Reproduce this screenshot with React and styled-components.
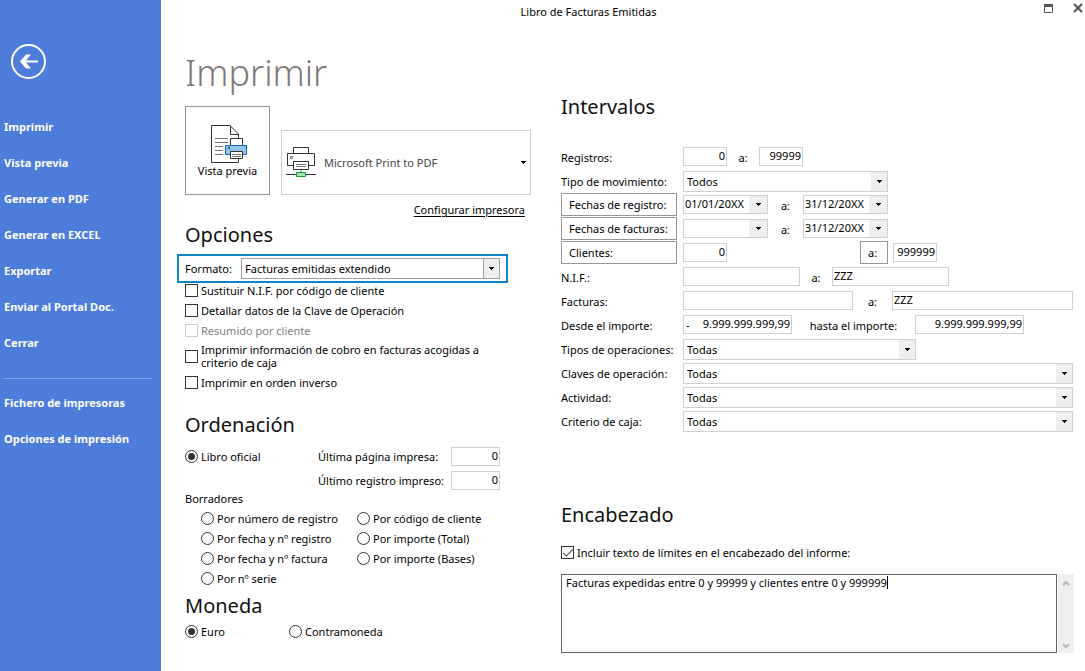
import React, { useState } from "react";
import styled, { createGlobalStyle } from "styled-components";

const GlobalStyle = createGlobalStyle`
    * {
        box-sizing: border-box;
    }

    body {
        margin: 0;
        background: #fff;
    }

    body, button, input, select, textarea {
        font-family: "Noto Sans", "Open Sans", sans-serif;
        font-size: 11px;
        color: #000;
    }
`;

const Window = styled.div`
    display: flex;
    min-height: 100vh;
`;

const Sidebar = styled.aside`
    flex: 0 0 161px;
    padding-top: 43px;
    background: #4d7cdb;
`;

const BackButton = styled.button`
    display: block;
    margin: 0 0 29px 10px;
    padding: 0;
    border: 0;
    background: none;
    line-height: 0;
`;

const MenuLink = styled.a`
    display: block;
    padding-left: 4px;
    line-height: 36px;
    font-weight: 700;
    color: #fff;
    text-decoration: none;
`;

const MenuDivider = styled.hr`
    margin: 17px 8px 6px 3px;
    border: 0;
    border-top: 1px solid #7c9fe6;
`;

const Main = styled.main`
    flex: 1;
    min-width: 0;
`;

const TitleBar = styled.header`
    display: flex;
    height: 24px;
    line-height: 24px;
`;

const WindowTitle = styled.div`
    flex: 1;
    text-align: center;
`;

const WindowButtons = styled.div`
    display: flex;
    justify-content: flex-end;
    align-items: flex-start;
    gap: 17px;
    width: 69px;
    padding: 2px 1px 0 0;
`;

const WindowButton = styled.button`
    padding: 0;
    border: 0;
    background: none;
    line-height: 0;
`;

const Columns = styled.div`
    display: flex;
    gap: 30px;
    padding: 0 12px 0 24px;
`;

const LeftColumn = styled.div`
    flex: 0 0 346px;
    padding-top: 24px;
`;

const RightColumn = styled.div`
    flex: 1;
    min-width: 0;
    padding-top: 68px;
`;

const PageTitle = styled.h1`
    margin: 0;
    line-height: 50px;
    font-size: 36px;
    font-weight: 300;
    color: #807a7a;
`;

const Heading = styled.h2`
    margin: 0;
    line-height: 30px;
    font-size: 20px;
    font-weight: 400;
    color: #111;
`;

const PrintRow = styled.div`
    display: flex;
    align-items: flex-end;
    gap: 11px;
    margin-top: 8px;
`;

const PreviewButton = styled.button`
    display: flex;
    flex-direction: column;
    align-items: center;
    width: 85px;
    height: 89px;
    padding: 18px 0 0;
    border: 1px solid #969696;
    background: #fff;
    line-height: 14px;
    white-space: nowrap;
`;

const PrinterBox = styled.div`
    display: grid;
    grid-template-columns: 38px 1fr 14px;
    grid-template-rows: 1fr;
    align-items: center;
    flex: 1;
    height: 65px;
    border: 1px solid #d0d0d0;

    svg {
        grid-row: 1;
        grid-column: 1;
        justify-self: center;
        pointer-events: none;
    }

    svg:last-child {
        grid-column: 3;
    }
`;

const PrinterSelect = styled.select`
    grid-row: 1;
    grid-column: 1 / 4;
    width: 100%;
    height: 100%;
    padding: 0 20px 0 42px;
    border: 0;
    appearance: none;
    background: none;
    color: #444;
`;

const ConfigLine = styled.div`
    padding: 5px 6px 0 0;
    text-align: right;
    line-height: 20px;

    a {
        color: #000;
        text-underline-offset: 2px;
    }
`;

const FormatRow = styled.div`
    display: flex;
    align-items: center;
    justify-content: space-between;
    width: 331px;
    margin: 4px 0 -3px -8px;
    padding: 2px 6px;
    border: 2px solid #0d84c5;
`;

const SelectBox = styled.div`
    display: grid;
    grid-template-columns: 1fr 16px;
    flex: ${props => (props.$width ? "none" : "1")};
    width: ${props => (props.$width ? props.$width + "px" : "auto")};
    height: 21px;
    border: 1px solid ${props => (props.$strong ? "#a0a0a0" : "#d0d0d0")};
`;

const Select = styled.select`
    grid-row: 1;
    grid-column: 1 / 3;
    min-width: 0;
    padding: 0 18px 0 3px;
    border: 0;
    appearance: none;
    background: #fff;
`;

const ArrowCell = styled.span`
    grid-row: 1;
    grid-column: 2;
    display: flex;
    align-items: center;
    justify-content: center;
    border-left: ${props => (props.$strong ? "1px solid #a0a0a0" : "0")};
    background: #efefef;
    pointer-events: none;
`;

const OptionLabel = styled.label`
    display: flex;
    align-items: center;
    gap: 3px;
    min-height: 20px;
    padding: 3px 0;
    line-height: 13px;
    color: ${props => (props.$off ? "#808080" : "#000")};
`;

const CheckInput = styled.input`
    display: grid;
    place-content: center;
    flex: none;
    width: 13px;
    height: 13px;
    margin: 0;
    border: 1px solid #333;
    appearance: none;
    background: #fff;

    &:disabled {
        border-color: #ccc;
    }

    &:checked::before {
        content: "";
        width: 9px;
        height: 4px;
        border: solid #444;
        border-width: 0 0 1px 1px;
        transform: translateY(-1px) rotate(-45deg);
    }
`;

const RadioInput = styled.input`
    display: grid;
    place-content: center;
    flex: none;
    width: 13px;
    height: 13px;
    margin: 0;
    border: 1px solid #333;
    border-radius: 50%;
    appearance: none;
    background: #fff;

    &:checked::before {
        content: "";
        width: 7px;
        height: 7px;
        border-radius: 50%;
        background: #333;
    }
`;

const OrderSection = styled.section`
    margin: 18px 0 3px;
`;

const OrderTop = styled.div`
    display: grid;
    grid-template-columns: 133px 133px 49px;
    grid-auto-rows: 24px;
    align-items: center;
    margin-top: 4px;
`;

const Drafts = styled.fieldset`
    margin: 0;
    padding: 0;
    border: 0;

    legend {
        padding: 0;
        line-height: 14px;
    }
`;

const DraftGrid = styled.div`
    display: grid;
    grid-template-columns: 156px 1fr;
    grid-template-rows: repeat(4, 20px);
    grid-auto-flow: column;
    padding: 2px 0 0 16px;
`;

const CurrencyRow = styled.div`
    display: grid;
    grid-template-columns: 104px 1fr;
`;

const Ranges = styled.div`
    display: flex;
    flex-direction: column;
    margin-top: 23px;
`;

const RangeRow = styled.div`
    display: flex;
    height: 24px;
    align-items: flex-start;
`;

const RangeLabel = styled.label`
    flex: 0 0 122px;
    line-height: 26px;
    white-space: nowrap;
`;

const RangeButtonCell = styled.div`
    flex: 0 0 122px;
`;

const RangeButton = styled.button`
    width: ${props => props.$width}px;
    height: 23px;
    padding: 0 7px;
    border: 1px solid #969696;
    background: #fff;
    text-align: left;
    white-space: nowrap;
`;

const RangeBody = styled.div`
    display: flex;
    flex: 1;
    min-width: 0;
    padding-top: 2px;
`;

const ClientGroup = styled.div`
    display: flex;
    justify-content: space-between;
    align-items: center;
    width: 205px;
    height: 19px;
    margin-right: 5px;
`;

const Until = styled.label`
    flex: 0 0 ${props => props.$width}px;
    text-align: center;
    line-height: 22px;
`;

const Field = styled.div`
    display: flex;
    flex: ${props => (props.$width ? "none" : "1")};
    width: ${props => (props.$width ? props.$width + "px" : "auto")};
    height: 19px;
    border: 1px solid #d0d0d0;
`;

const FieldInput = styled.input`
    flex: 1;
    width: 0;
    padding: 0 1px 2px;
    border: 0;
    outline: 0;
    background: none;
    text-align: ${props => (props.$right ? "right" : "left")};
`;

const Sign = styled.span`
    padding-left: 2px;
    line-height: 18px;
`;

const DateButton = styled.button`
    display: flex;
    align-items: center;
    justify-content: center;
    width: 18px;
    padding: 0;
    border: 0;
    background: #efefef;
`;

const HeaderSection = styled.section`
    margin-top: 67px;
`;

const HeaderOption = styled.div`
    margin-top: 12px;
`;

const NoteRow = styled.div`
    display: flex;
    gap: 1px;
    height: 79px;
    margin: 12px -1px 0 0;
`;

// the gradient is the text cursor after the last digit
const NoteArea = styled.textarea`
    flex: 1;
    min-width: 0;
    padding: 0 4px;
    border: 1px solid #646464;
    outline: 0;
    resize: none;
    overflow: hidden;
    line-height: 15px;
    background: linear-gradient(#000, #000) 325px 1px / 1px 13px no-repeat #fff;
`;

const ScrollTrack = styled.div`
    display: flex;
    flex-direction: column;
    justify-content: space-between;
    align-items: center;
    width: 16px;
    padding: 6px 0 4px;
    background: #efefef;
`;

const Arrow = () => (
    <svg width="5" height="3" viewBox="0 0 5 3" shapeRendering="crispEdges">
        <path d="M0 0h5v1H0zM1 1h3v1H1zM2 2h1v1H2z" fill="#000" />
    </svg>
);

const BackIcon = () => (
    <svg width="37" height="37" viewBox="0 0 37 37" fill="none">
        <circle cx="18.5" cy="18.5" r="16.5" stroke="#fff" strokeWidth="2" />
        <path d="M10 18.500l6-7h5l-5 6H28v2H16l5 6h-5z" fill="#fff" />
    </svg>
);

const PreviewIcon = () => (
    <svg width="39" height="39" viewBox="-3 0 39 39" fill="none" stroke="#333">
        <path d="M.5 .5h18.500l8.500 8.500v28.500H.5z" fill="#fff" />
        <path d="M19.500 .5v9h8" />
        <path d="M4 13.500h13M4 17.500h13M4 21.500h8M4 25.500h8M4 29.500h8" stroke="#777" />
        <path d="M19.500 13.500h12v7h-12z" fill="#fff" />
        <path d="M14.500 20.500h21v9h-21z" fill="#92c5ec" stroke="#1464b4" />
        <path d="M17 22h2v2h-2z" fill="#1464b4" stroke="none" />
        <path d="M19.500 26.500h12v7h-12z" fill="#fff" />
        <path d="M21 29.500h9M21 31.500h9" stroke="#777" />
    </svg>
);

const PrinterIcon = () => (
    <svg width="30" height="31" viewBox="0 0 30 31" fill="none" stroke="#333">
        <path d="M7.500 6.500v-6h15v6M7.500 18.500h-6v-12h27v12h-6" />
        <path d="M4.500 9.500h2v2h-2z" stroke="#777" />
        <path d="M7.500 14.500h15v8h-15z" />
        <path d="M10 17.500h10M10 19.500h10" stroke="#777" />
        <path d="M15 23v3" stroke="#9ccfa8" strokeWidth="2" />
        <path d="M0 27.500h30" />
        <path d="M10.500 25.500h9v4h-9z" fill="#a8e0b4" stroke="#109a3c" />
    </svg>
);

const ScrollArrow = ({ down }) => (
    <svg width="8" height="6" viewBox="0 0 8 6" fill="none" stroke="#b8b8b8" strokeWidth="2">
        <path d={down ? "M1 1l3 3 3-3" : "M1 5l3-3 3 3"} />
    </svg>
);

const Dropdown = ({ id, value, width, strong }) => (
    <SelectBox $width={width} $strong={strong}>
        <Select id={id} defaultValue={value}>
            <option>{value}</option>
        </Select>
        <ArrowCell $strong={strong}><Arrow /></ArrowCell>
    </SelectBox>
);

const TextField = ({ id, value = "", width, right, sign, label }) => (
    <Field $width={width}>
        {sign && <Sign>{sign}</Sign>}
        <FieldInput id={id} type="text" defaultValue={value} $right={right} aria-label={label} />
    </Field>
);

const DateField = ({ id, value = "", label }) => (
    <Field $width={85}>
        <FieldInput id={id} type="text" defaultValue={value} aria-label={label} />
        <DateButton type="button" aria-label="Abrir calendario"><Arrow /></DateButton>
    </Field>
);

const Check = ({ children, ...rest }) => (
    <OptionLabel $off={rest.disabled}>
        <CheckInput type="checkbox" {...rest} />
        <span>{children}</span>
    </OptionLabel>
);

const Radio = ({ name, value, current, onChange }) => (
    <OptionLabel>
        <RadioInput type="radio" name={name} checked={current === value} onChange={() => onChange(value)} />
        <span>{value}</span>
    </OptionLabel>
);

const menu = ["Imprimir", "Vista previa", "Generar en PDF", "Generar en EXCEL", "Exportar", "Enviar al Portal Doc.", "Cerrar"];
const printerMenu = ["Fichero de impresoras", "Opciones de impresión"];

const drafts = [
    "Por número de registro",
    "Por fecha y nº registro",
    "Por fecha y nº factura",
    "Por nº serie",
    "Por código de cliente",
    "Por importe (Total)",
    "Por importe (Bases)"
];

const App = () => {
    const [order, setOrder] = useState("Libro oficial");
    const [currency, setCurrency] = useState("Euro");

    return (
        <Window>
            <GlobalStyle />
            <Sidebar>
                <BackButton type="button" aria-label="Volver"><BackIcon /></BackButton>
                <nav>
                    {menu.map(item => <MenuLink href="#" key={item}>{item}</MenuLink>)}
                    <MenuDivider />
                    {printerMenu.map(item => <MenuLink href="#" key={item}>{item}</MenuLink>)}
                </nav>
            </Sidebar>

            <Main>
                <TitleBar>
                    <WindowTitle>Libro de Facturas Emitidas</WindowTitle>
                    <WindowButtons>
                        <WindowButton type="button" aria-label="Maximizar">
                            <svg width="12" height="12" viewBox="0 0 12 12" fill="none" stroke="#555">
                                <path d="M1.500 2.500h8v8h-8z" />
                                <path d="M1 3.500h9" strokeWidth="3" />
                            </svg>
                        </WindowButton>
                        <WindowButton type="button" aria-label="Cerrar ventana">
                            <svg width="12" height="12" viewBox="0 0 12 12" stroke="#555" strokeWidth="2">
                                <path d="M2 2l8 8M10 2l-8 8" />
                            </svg>
                        </WindowButton>
                    </WindowButtons>
                </TitleBar>

                <Columns>
                    <LeftColumn>
                        <PageTitle>Imprimir</PageTitle>
                        <PrintRow>
                            <PreviewButton type="button">
                                <PreviewIcon />
                                Vista previa
                            </PreviewButton>
                            <PrinterBox>
                                <PrinterSelect aria-label="Impresora" defaultValue="Microsoft Print to PDF">
                                    <option>Microsoft Print to PDF</option>
                                </PrinterSelect>
                                <PrinterIcon />
                                <Arrow />
                            </PrinterBox>
                        </PrintRow>
                        <ConfigLine><a href="#">Configurar impresora</a></ConfigLine>

                        <Heading>Opciones</Heading>
                        <FormatRow>
                            <label htmlFor="formato">Formato:</label>
                            <Dropdown id="formato" value="Facturas emitidas extendido" width={259} strong />
                        </FormatRow>
                        <Check>Sustituir N.I.F. por código de cliente</Check>
                        <Check>Detallar datos de la Clave de Operación</Check>
                        <Check disabled>Resumido por cliente</Check>
                        <Check>Imprimir información de cobro en facturas acogidas a<br />criterio de caja</Check>
                        <Check>Imprimir en orden inverso</Check>

                        <OrderSection>
                            <Heading>Ordenación</Heading>
                            <OrderTop>
                                <Radio name="orden" value="Libro oficial" current={order} onChange={setOrder} />
                                <label htmlFor="pagina">Última página impresa:</label>
                                <TextField id="pagina" value="0" width={49} right />
                                <span />
                                <label htmlFor="registro">Último registro impreso:</label>
                                <TextField id="registro" value="0" width={49} right />
                            </OrderTop>
                            <Drafts>
                                <legend>Borradores</legend>
                                <DraftGrid>
                                    {drafts.map(item => (
                                        <Radio key={item} name="orden" value={item} current={order} onChange={setOrder} />
                                    ))}
                                </DraftGrid>
                            </Drafts>
                        </OrderSection>

                        <Heading>Moneda</Heading>
                        <CurrencyRow>
                            <Radio name="moneda" value="Euro" current={currency} onChange={setCurrency} />
                            <Radio name="moneda" value="Contramoneda" current={currency} onChange={setCurrency} />
                        </CurrencyRow>
                    </LeftColumn>

                    <RightColumn>
                        <Heading>Intervalos</Heading>
                        <Ranges>
                            <RangeRow>
                                <RangeLabel htmlFor="reg1">Registros:</RangeLabel>
                                <RangeBody>
                                    <TextField id="reg1" value="0" width={44} right />
                                    <Until htmlFor="reg2" $width={32}>a:</Until>
                                    <TextField id="reg2" value="99999" width={44} right />
                                </RangeBody>
                            </RangeRow>
                            <RangeRow>
                                <RangeLabel htmlFor="tipo">Tipo de movimiento:</RangeLabel>
                                <RangeBody><Dropdown id="tipo" value="Todos" width={205} /></RangeBody>
                            </RangeRow>
                            <RangeRow>
                                <RangeButtonCell><RangeButton type="button" $width={116}>Fechas de registro:</RangeButton></RangeButtonCell>
                                <RangeBody>
                                    <DateField value="01/01/20XX" label="Fecha de registro inicial" />
                                    <Until htmlFor="freg2" $width={35}>a:</Until>
                                    <DateField id="freg2" value="31/12/20XX" />
                                </RangeBody>
                            </RangeRow>
                            <RangeRow>
                                <RangeButtonCell><RangeButton type="button" $width={116}>Fechas de facturas:</RangeButton></RangeButtonCell>
                                <RangeBody>
                                    <DateField label="Fecha de factura inicial" />
                                    <Until htmlFor="ffac2" $width={35}>a:</Until>
                                    <DateField id="ffac2" value="31/12/20XX" />
                                </RangeBody>
                            </RangeRow>
                            <RangeRow>
                                <RangeButtonCell><RangeButton type="button" $width={116}>Clientes:</RangeButton></RangeButtonCell>
                                <RangeBody>
                                    <ClientGroup>
                                        <TextField value="0" width={44} right label="Cliente inicial" />
                                        <RangeButton type="button" $width={28}>a:</RangeButton>
                                    </ClientGroup>
                                    <TextField value="999999" width={44} right label="Cliente final" />
                                </RangeBody>
                            </RangeRow>
                            <RangeRow>
                                <RangeLabel htmlFor="nif1">N.I.F.:</RangeLabel>
                                <RangeBody>
                                    <TextField id="nif1" width={117} />
                                    <Until htmlFor="nif2" $width={32}>a:</Until>
                                    <TextField id="nif2" value="ZZZ" width={117} />
                                </RangeBody>
                            </RangeRow>
                            <RangeRow>
                                <RangeLabel htmlFor="fac1">Facturas:</RangeLabel>
                                <RangeBody>
                                    <TextField id="fac1" width={170} />
                                    <Until htmlFor="fac2" $width={39}>a:</Until>
                                    <TextField id="fac2" value="ZZZ" />
                                </RangeBody>
                            </RangeRow>
                            <RangeRow>
                                <RangeLabel htmlFor="imp1">Desde el importe:</RangeLabel>
                                <RangeBody>
                                    <TextField id="imp1" value="9.999.999.999,99" width={109} sign="-" right />
                                    <Until htmlFor="imp2" $width={123}>hasta el importe:</Until>
                                    <TextField id="imp2" value="9.999.999.999,99" width={109} right />
                                </RangeBody>
                            </RangeRow>
                            <RangeRow>
                                <RangeLabel htmlFor="tipos">Tipos de operaciones:</RangeLabel>
                                <RangeBody><Dropdown id="tipos" value="Todas" width={233} /></RangeBody>
                            </RangeRow>
                            <RangeRow>
                                <RangeLabel htmlFor="claves">Claves de operación:</RangeLabel>
                                <RangeBody><Dropdown id="claves" value="Todas" /></RangeBody>
                            </RangeRow>
                            <RangeRow>
                                <RangeLabel htmlFor="actividad">Actividad:</RangeLabel>
                                <RangeBody><Dropdown id="actividad" value="Todas" /></RangeBody>
                            </RangeRow>
                            <RangeRow>
                                <RangeLabel htmlFor="criterio">Criterio de caja:</RangeLabel>
                                <RangeBody><Dropdown id="criterio" value="Todas" /></RangeBody>
                            </RangeRow>
                        </Ranges>

                        <HeaderSection>
                            <Heading>Encabezado</Heading>
                            <HeaderOption>
                                <Check defaultChecked>Incluir texto de límites en el encabezado del informe:</Check>
                            </HeaderOption>
                            <NoteRow>
                                <NoteArea
                                    aria-label="Texto de límites"
                                    defaultValue="Facturas expedidas entre 0 y 99999 y clientes entre 0 y 999999"
                                />
                                <ScrollTrack>
                                    <ScrollArrow />
                                    <ScrollArrow down />
                                </ScrollTrack>
                            </NoteRow>
                        </HeaderSection>
                    </RightColumn>
                </Columns>
            </Main>
        </Window>
    );
};

export default App;
